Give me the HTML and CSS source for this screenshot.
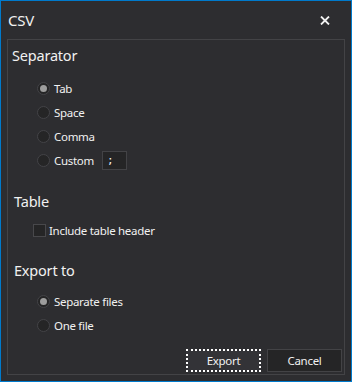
FILE: index.html
```html
<!DOCTYPE html>
<html>
<head>
<meta charset="utf-8">
<title>CSV</title>
<link rel="stylesheet" href="styles.css">
</head>
<body>
<div class="win">
	<div class="titlebar">
		<span class="ttl">CSV</span>
		<span class="close">
			<svg width="10" height="9" viewBox="0 0 10 9"><path d="M1 0.5 L9 8.5 M9 0.5 L1 8.5" stroke="#f1f1f1" stroke-width="1.8"/></svg>
		</span>
	</div>
	<div class="group">
		<h3 class="hd hd-first">Separator</h3>
		<div class="opts">
			<label class="row"><span class="radio on"></span>Tab</label>
			<label class="row"><span class="radio"></span>Space</label>
			<label class="row"><span class="radio"></span>Comma</label>
			<label class="row"><span class="radio"></span><span class="lbl-w">Custom</span><span class="txt">;</span></label>
		</div>
		<h3 class="hd hd-table">Table</h3>
		<div class="opts opts-chk">
			<label class="row"><span class="chk"></span>Include table header</label>
		</div>
		<h3 class="hd hd-export">Export to</h3>
		<div class="opts opts-exp">
			<label class="row"><span class="radio on"></span>Separate files</label>
			<label class="row"><span class="radio"></span>One file</label>
		</div>
		<div class="foot">
			<span class="btn btn-focus">Export</span>
			<span class="btn">Cancel</span>
		</div>
	</div>
</div>
</body>
</html>
```
FILE: styles.css
```css
*,*:before,*:after{
	padding: 0;
	margin: 0;
	box-sizing: border-box;
}
body{
	background: #2d2d30;
	font-family: "Noto Sans", "Open Sans", sans-serif;
	color: #f1f1f1;
}
.win{
	width: 352px;
	height: 382px;
	border: 1px solid #007acc;
	background: #2d2d30;
	display: flex;
	flex-direction: column;
}
.titlebar{
	height: 38px;
	display: flex;
	align-items: center;
	justify-content: space-between;
	padding: 0 21px 0 7px;
}
.ttl{
	font-size: 15px;
	line-height: 20px;
	letter-spacing: -0.2px;
}
.close{
	display: flex;
}
.group{
	margin: 0 6px;
	height: 336px;
	border: 1px solid #434346;
	display: flex;
	flex-direction: column;
}
.hd{
	font-weight: normal;
	font-size: 14.5px;
	letter-spacing: -0.2px;
	line-height: 20px;
	padding-left: 6px;
}
.hd-first{
	margin-top: 5px;
	padding-left: 4px;
}
.hd-table{
	margin-top: 19px;
}
.hd-export{
	margin-top: 18px;
}
.opts{
	display: flex;
	flex-direction: column;
	padding-left: 29px;
	margin-top: 11px;
}
.opts-chk{
	margin-top: 7px;
	padding-left: 25px;
}
.opts-exp{
	margin-top: 9px;
}
.row{
	height: 24px;
	display: flex;
	align-items: center;
	font-size: 11.5px;
	letter-spacing: -0.3px;
}
.radio{
	width: 13px;
	height: 13px;
	border-radius: 50%;
	background: #252526;
	border: 1px solid #434347;
	margin-right: 4px;
	display: flex;
	align-items: center;
	justify-content: center;
}
.radio.on:after{
	content: "";
	width: 7px;
	height: 7px;
	border-radius: 50%;
	background: #9d9d9d;
}
.chk{
	width: 13px;
	height: 13px;
	background: #252526;
	border: 1px solid #48484b;
	margin-right: 3px;
}
.lbl-w{
	min-width: 48px;
}
.txt{
	width: 25px;
	height: 19px;
	background: #252526;
	border: 1px solid #434346;
	font-family: "DejaVu Sans Mono", monospace;
	font-size: 11px;
	line-height: 17px;
	padding-left: 4px;
}
.foot{
	margin-top: auto;
	display: flex;
	justify-content: flex-end;
	gap: 6px;
	padding: 0 2px 2px 0;
}
.btn{
	width: 75px;
	height: 23px;
	display: flex;
	align-items: center;
	justify-content: center;
	font-size: 11.5px;
	letter-spacing: -0.3px;
	background: #252526;
	border: 1px solid #434346;
}
.btn-focus{
	background: #333337;
	border: 2px dotted #ffffff;
}
```
